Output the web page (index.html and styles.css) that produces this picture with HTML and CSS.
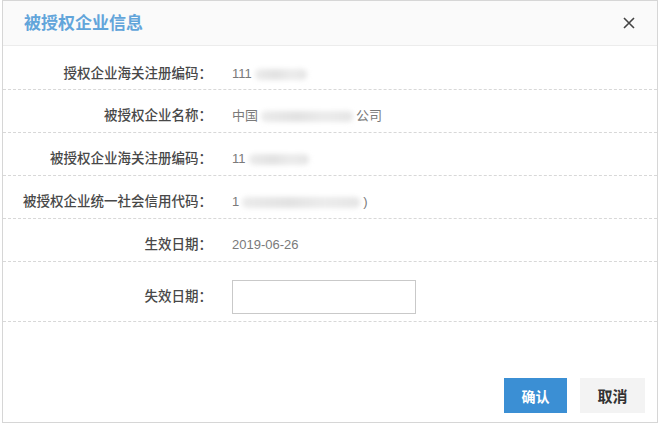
FILE: index.html
```html
<!DOCTYPE html>
<html lang="zh">
<head>
<meta charset="utf-8">
<title>被授权企业信息</title>
<link rel="stylesheet" href="styles.css">
</head>
<body>
<div class="dialog">
  <div class="header">
    <div class="title">被授权企业信息</div>
    <svg class="close" width="12" height="12" viewBox="0 0 12 12"><path d="M1 1L11 11M11 1L1 11" stroke="#444" stroke-width="1.6" fill="none"/></svg>
  </div>
  <div class="body">
    <div class="row">
      <div class="label">授权企业海关注册编码：</div>
      <div class="value">111<span class="blur w55"></span></div>
    </div>
    <div class="row">
      <div class="label">被授权企业名称：</div>
      <div class="value">中国<span class="blur w95"></span>公司</div>
    </div>
    <div class="row">
      <div class="label">被授权企业海关注册编码：</div>
      <div class="value">11<span class="blur w62"></span></div>
    </div>
    <div class="row">
      <div class="label">被授权企业统一社会信用代码：</div>
      <div class="value">1<span class="blur w122"></span>)</div>
    </div>
    <div class="row">
      <div class="label">生效日期：</div>
      <div class="value">2019-06-26</div>
    </div>
    <div class="row tall">
      <div class="label">失效日期：</div>
      <div class="value"><input class="input" type="text"></div>
    </div>
  </div>
  <div class="footer">
    <button class="btn primary">确认</button>
    <button class="btn plain">取消</button>
  </div>
</div>
</body>
</html>
```
FILE: styles.css
```css
* { box-sizing: border-box; }
html, body { margin: 0; padding: 0; background: #fff; }
body { font-family: "Liberation Sans", "Noto Sans CJK SC", sans-serif; }
.dialog {
  margin-left: 2px;
  width: 656px;
  height: 423px;
  border: 1px solid #d6d6d6;
  display: flex;
  flex-direction: column;
  background: #fff;
}
.header {
  height: 45px;
  flex: none;
  background: #fafafa;
  border-bottom: 1px solid #ececec;
  display: flex;
  align-items: center;
  justify-content: space-between;
  padding: 0 22px 4px 21px;
}
.title {
  font-size: 17px;
  font-weight: bold;
  color: #62a5da;
}
.close { margin-top: 3px; }
.body { flex: none; }
.row {
  height: 43px;
  padding-top: 10px;
  border-bottom: 1px dashed #d8d8d8;
  display: flex;
  align-items: center;
  font-size: 13px;
  line-height: 18px;
}
.row:first-child { height: 44px; padding-top: 13px; }
.row.tall { height: 60px; }
.label {
  width: 209px;
  flex: none;
  text-align: right;
  color: #484848;
  font-weight: 500;
  font-size: 13.5px;
}
.value {
  margin-left: 20px;
  color: #7a7a7a;
  display: flex;
  align-items: center;
  white-space: nowrap;
}
.blur {
  display: inline-block;
  height: 11px;
  border-radius: 5px;
  background: linear-gradient(90deg, #ebebeb, #e2e2e2 40%, #ececec 70%, #e5e5e5);
  filter: blur(2.5px);
  margin: 0 3px;
}
.w55 { width: 52px; }
.w95 { width: 92px; }
.w62 { width: 60px; }
.w122 { width: 118px; }
.input {
  width: 184px;
  height: 34px;
  border: 1px solid #c9c9c9;
  background: #fff;
  padding: 0 6px;
  font-size: 13px;
}
.footer {
  flex: 1;
  display: flex;
  justify-content: flex-end;
  align-items: flex-start;
  padding: 56px 12px 0 0;
  gap: 13px;
}
.btn {
  height: 35px;
  border: none;
  font-family: "Liberation Sans", "Noto Sans CJK SC", sans-serif;
  font-size: 15px;
  font-weight: bold;
  padding: 0;
}
.primary { width: 63px; background: #3b8fd4; color: #fff; font-size: 14px; }
.plain { width: 65px; background: #f3f3f3; color: #333; }
```
